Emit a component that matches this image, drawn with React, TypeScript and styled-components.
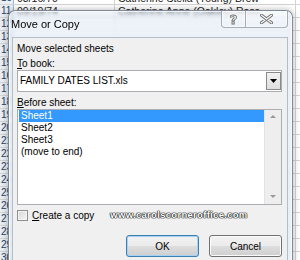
import React from "react";
import styled, { createGlobalStyle } from "styled-components";

const GlobalStyle = createGlobalStyle`
  html, body {
    margin: 0;
    padding: 0;
  }
  body {
    width: 300px;
    height: 260px;
    overflow: hidden;
    background: #fff;
    font-family: "Liberation Sans", Arial, sans-serif;
  }
`;

const Screen = styled.div`
  position: relative;
  width: 300px;
  height: 260px;
  overflow: hidden;
  background: #fff;
`;

/* spreadsheet behind the dialog */

const Sheet = styled.div`
  display: flex;
  flex-direction: column;
  margin-top: -8px;
`;

const SheetRow = styled.div`
  display: grid;
  grid-template-columns: 14px 101px 181px 40px;
  height: 13px;
  box-sizing: border-box;
  border-bottom: 1px solid #d4d4d4;
`;

const RowHead = styled.div`
  background: #e9eef4;
  border-right: 1px solid #9eb6ce;
  padding-left: 1px;
  font-size: 10px;
  line-height: 12px;
  color: #27415f;
`;

const Cell = styled.div`
  border-right: 1px solid #d4d4d4;
  padding-left: 3px;
  font-size: 10.5px;
  line-height: 12px;
  color: #1a1a1a;
  white-space: nowrap;
  overflow: hidden;
`;

/* the dialog window */

const Window = styled.div`
  position: absolute;
  left: 8px;
  top: 10px;
  width: 285px;
  height: 262px;
  box-sizing: border-box;
  border: 1px solid rgba(40, 55, 75, 0.55);
  border-radius: 7px 7px 0 0;
  padding: 0 4px 0 3px;
  display: flex;
  flex-direction: column;
  background: linear-gradient(
    180deg,
    rgba(214, 227, 241, 0.45) 0px,
    rgba(234, 240, 248, 0.85) 14px,
    rgba(230, 237, 245, 0.9) 100%
  );
  backdrop-filter: blur(1.5px);
  box-shadow: 0 0 7px rgba(0, 0, 0, 0.3), inset 0 0 0 1px rgba(255, 255, 255, 0.75);
`;

const TitleBar = styled.div`
  height: 26px;
  display: flex;
  justify-content: space-between;
  align-items: flex-start;
`;

const Title = styled.div`
  padding-top: 6px;
  margin-left: -1px;
  font-size: 11px;
  line-height: 14px;
  color: #000;
`;

const Caption = styled.div`
  display: flex;
`;

const CaptionButton = styled.div<{ $w: number; $side: "left" | "right" }>`
  width: ${(p) => p.$w}px;
  height: 17px;
  box-sizing: border-box;
  display: flex;
  align-items: center;
  justify-content: center;
  border: 1px solid rgba(70, 85, 100, 0.45);
  border-top: none;
  border-left: ${(p) => (p.$side === "right" ? "none" : "1px solid rgba(70, 85, 100, 0.45)")};
  border-radius: ${(p) => (p.$side === "left" ? "0 0 0 4px" : "0 0 4px 0")};
  background: linear-gradient(180deg, rgba(255, 255, 255, 0.55), rgba(235, 241, 248, 0.75));
  box-shadow: inset 0 0 0 1px rgba(255, 255, 255, 0.6);
`;

const HelpGlyph = styled.span`
  font-family: "DejaVu Sans", sans-serif;
  font-weight: bold;
  font-size: 13px;
  line-height: 13px;
  color: #f4f4f4;
  -webkit-text-stroke: 0.8px #6b6b6b;
`;

const Client = styled.div`
  flex: 1;
  background: #f0f0f0;
  border: 1px solid #b4bec8;
  padding: 5px 5px 0 4px;
  display: flex;
  flex-direction: column;
  font-size: 10px;
  color: #000;
`;

const Label = styled.div<{ $gap?: number }>`
  line-height: 12px;
  margin-top: ${(p) => p.$gap ?? 0}px;
  white-space: nowrap;
`;

const Combo = styled.div`
  height: 22px;
  box-sizing: border-box;
  border: 1px solid #abadb3;
  background: #fff;
  display: flex;
  align-items: center;
  justify-content: space-between;
  padding-left: 2px;
`;

const ComboText = styled.span`
  font-size: 10px;
  line-height: 12px;
`;

const DropButton = styled.div`
  width: 15px;
  height: 18px;
  box-sizing: border-box;
  border: 1px solid #8a8a8a;
  background: linear-gradient(180deg, #f2f2f2, #dedede);
  display: flex;
  align-items: center;
  justify-content: center;
`;

const ListBox = styled.div`
  height: 96px;
  box-sizing: border-box;
  border: 1px solid #abadb3;
  background: #fff;
  display: flex;
`;

const Items = styled.div`
  flex: 1;
  padding: 0 0 0 1px;
  display: flex;
  flex-direction: column;
`;

const Item = styled.div<{ $selected?: boolean }>`
  height: 12px;
  line-height: 12px;
  padding-left: 2px;
  background: ${(p) => (p.$selected ? "#3399ff" : "transparent")};
  color: ${(p) => (p.$selected ? "#fff" : "#000")};
`;

const ScrollBar = styled.div`
  width: 16px;
  background: #eeeeee;
  border-left: 1px solid #e2e2e2;
  display: flex;
  flex-direction: column;
  justify-content: space-between;
  align-items: center;
  padding: 5px 0 6px;
`;

const CheckRow = styled.div`
  margin-top: 5px;
  height: 11px;
  display: flex;
  align-items: center;
`;

const CheckBox = styled.div`
  flex: none;
  width: 11px;
  height: 11px;
  box-sizing: border-box;
  border: 1px solid #8f8f8f;
  background: linear-gradient(135deg, #d6d6d6, #f6f6f6);
  box-shadow: inset 0 0 0 1px #f4f4f4;
`;

const CheckText = styled.span`
  flex: none;
  margin-left: 4px;
  line-height: 11px;
`;

const Watermark = styled.span`
  flex: none;
  margin-left: 16px;
  margin-top: -3px;
  font-size: 9.5px;
  font-weight: bold;
  letter-spacing: 0.3px;
  white-space: nowrap;
  color: #fff;
  text-shadow: 0 0 1px #111, 0 0 1px #111, 0 0 1px #111, 0 0 1px #111;
`;

const ButtonRow = styled.div`
  margin-top: 14px;
  display: flex;
  justify-content: flex-end;
  gap: 10px;
`;

const Button = styled.div<{ $default?: boolean }>`
  width: 73px;
  height: 22px;
  box-sizing: border-box;
  border: 1px solid ${(p) => (p.$default ? "#3c7fb1" : "#707070")};
  border-radius: 3px;
  background: linear-gradient(180deg, #f2f2f2 0%, #ebebeb 50%, #dddddd 51%, #cfcfcf 100%);
  box-shadow: inset 0 0 0 1px ${(p) => (p.$default ? "#a6d2f5" : "#fbfbfb")};
  display: flex;
  align-items: center;
  justify-content: center;
  font-size: 10px;
`;

const sheetRows = [
  { n: "10", a: "03/16/70", b: "Catherine Stella (Young) Brew" },
  { n: "11", a: "09/19/74", b: "Catherine Anne (Oakley) Ross" },
  ...Array.from({ length: 19 }, (_, i) => ({ n: String(12 + i), a: "", b: "" })),
];

const sheets = ["Sheet1", "Sheet2", "Sheet3", "(move to end)"];

function CloseIcon() {
  return (
    <svg width="13" height="10" viewBox="0 0 13 10">
      <path d="M1.5 1.2 L11.5 8.8 M11.5 1.2 L1.5 8.8" stroke="#6a6a6a" strokeWidth="3" strokeLinecap="round" />
      <path d="M1.5 1.2 L11.5 8.8 M11.5 1.2 L1.5 8.8" stroke="#f6f6f6" strokeWidth="1.4" strokeLinecap="round" />
    </svg>
  );
}

function Arrow({ up, color = "#000", w = 7, h = 4 }: { up?: boolean; color?: string; w?: number; h?: number }) {
  return (
    <svg width={w} height={h} viewBox={`0 0 ${w} ${h}`}>
      <polygon points={up ? `0,${h} ${w},${h} ${w / 2},0` : `0,0 ${w},0 ${w / 2},${h}`} fill={color} />
    </svg>
  );
}

export default function App() {
  return (
    <Screen>
      <GlobalStyle />
      <Sheet>
        {sheetRows.map((r) => (
          <SheetRow key={r.n}>
            <RowHead>{r.n}</RowHead>
            <Cell>{r.a}</Cell>
            <Cell>{r.b}</Cell>
            <Cell />
          </SheetRow>
        ))}
      </Sheet>

      <Window>
        <TitleBar>
          <Title>Move or Copy</Title>
          <Caption>
            <CaptionButton $w={25} $side="left">
              <HelpGlyph>?</HelpGlyph>
            </CaptionButton>
            <CaptionButton $w={42} $side="right">
              <CloseIcon />
            </CaptionButton>
          </Caption>
        </TitleBar>

        <Client>
          <Label>Move selected sheets</Label>
          <Label $gap={3}>
            <u>T</u>o book:
          </Label>
          <Combo>
            <ComboText>FAMILY DATES LIST.xls</ComboText>
            <DropButton>
              <Arrow />
            </DropButton>
          </Combo>
          <Label $gap={5}>
            <u>B</u>efore sheet:
          </Label>
          <ListBox>
            <Items>
              {sheets.map((s, i) => (
                <Item key={s} $selected={i === 0}>
                  {s}
                </Item>
              ))}
            </Items>
            <ScrollBar>
              <Arrow up color="#9a9a9a" w={6} h={3} />
              <Arrow color="#9a9a9a" w={6} h={3} />
            </ScrollBar>
          </ListBox>
          <CheckRow>
            <CheckBox />
            <CheckText>
              <u>C</u>reate a copy
            </CheckText>
            <Watermark>www.carolscorneroffice.com</Watermark>
          </CheckRow>
          <ButtonRow>
            <Button $default>OK</Button>
            <Button>Cancel</Button>
          </ButtonRow>
        </Client>
      </Window>
    </Screen>
  );
}
